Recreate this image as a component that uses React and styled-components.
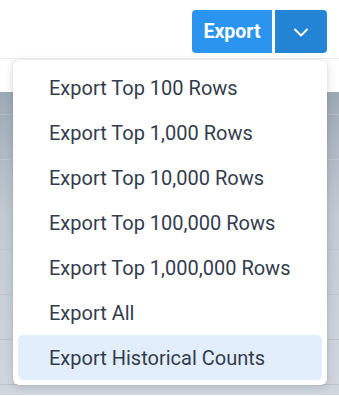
import React from 'react'
import styled, { createGlobalStyle } from 'styled-components'

const GlobalStyle = createGlobalStyle`
    html, body {
        margin: 0;
        padding: 0;
        background: #ffffff;
        font-family: Roboto, "Liberation Sans", sans-serif;
    }
`

const options = [
    'Export Top 100 Rows',
    'Export Top 1,000 Rows',
    'Export Top 10,000 Rows',
    'Export Top 100,000 Rows',
    'Export Top 1,000,000 Rows',
    'Export All',
    'Export Historical Counts',
]

const App = () => {
    const [active] = React.useState(6)
    return (
        <Page>
            <GlobalStyle />
            <Header>
                <ButtonGroup>
                    <ExportButton>Export</ExportButton>
                    <ToggleButton aria-label="More export options">
                        <svg width="18" height="18" viewBox="0 0 18 18">
                            <path d="M3 6.5l6 6 6-6" fill="none" stroke="#fff" strokeWidth="1.9" strokeLinecap="round" strokeLinejoin="round" />
                        </svg>
                    </ToggleButton>
                </ButtonGroup>
            </Header>
            <Toolbar />
            <Table>
                <HeadRow />
                {[0, 1, 2, 3, 4, 5].map(i => <Row key={i} />)}
            </Table>
            <Menu>
                {options.map((label, index) => (
                    <Item key={label} active={index === active}>{label}</Item>
                ))}
            </Menu>
        </Page>
    )
}

export default App

const Page = styled.div`
    position: relative;
    width: 339px;
    height: 396px;
    overflow: hidden;
    background: #ffffff;
`

const Header = styled.div`
    height: 59px;
    box-sizing: border-box;
    display: flex;
    justify-content: flex-end;
    align-items: flex-start;
    padding: 10px 12px 0 0;
    border-bottom: 1px solid #eceef1;
`

const ButtonGroup = styled.div`
    display: flex;
    gap: 3px;
`

const ExportButton = styled.button`
    width: 80px;
    height: 43px;
    padding: 0;
    border: none;
    border-radius: 4px 0 0 4px;
    background: #2a94ef;
    color: #ffffff;
    font-family: Roboto, "Liberation Sans", sans-serif;
    font-weight: 700;
    font-size: 19.5px;
    cursor: pointer;
`

const ToggleButton = styled.button`
    width: 52px;
    height: 43px;
    border: none;
    border-radius: 0 4px 4px 0;
    background: #2384d6;
    display: flex;
    align-items: center;
    justify-content: center;
    padding: 0;
    cursor: pointer;
`

const Toolbar = styled.div`
    height: 33px;
`

const Table = styled.div`
    background: linear-gradient(180deg, #9ea9b6 0%, #c2c9d2 40%, #d1d7de 100%);
    height: 303px;
`

const HeadRow = styled.div`
    height: 22px;
    border-bottom: 1px solid #b3bcc7;
`

const Row = styled.div`
    height: 44px;
    border-bottom: 1px solid #bcc4ce;
`

const Menu = styled.div`
    position: absolute;
    top: 60px;
    left: 13px;
    width: 314px;
    box-sizing: border-box;
    padding: 5px;
    background: #ffffff;
    border-radius: 6px;
    box-shadow: 0 2px 8px rgba(30, 41, 59, 0.18), 0 0 1px rgba(30, 41, 59, 0.25);
`

const Item = styled.div`
    height: 45px;
    display: flex;
    align-items: center;
    padding-left: 31px;
    border-radius: 5px;
    font-size: 20px;
    color: #323c4d;
    background: ${props => props.active ? '#e3eefc' : 'transparent'};
`
